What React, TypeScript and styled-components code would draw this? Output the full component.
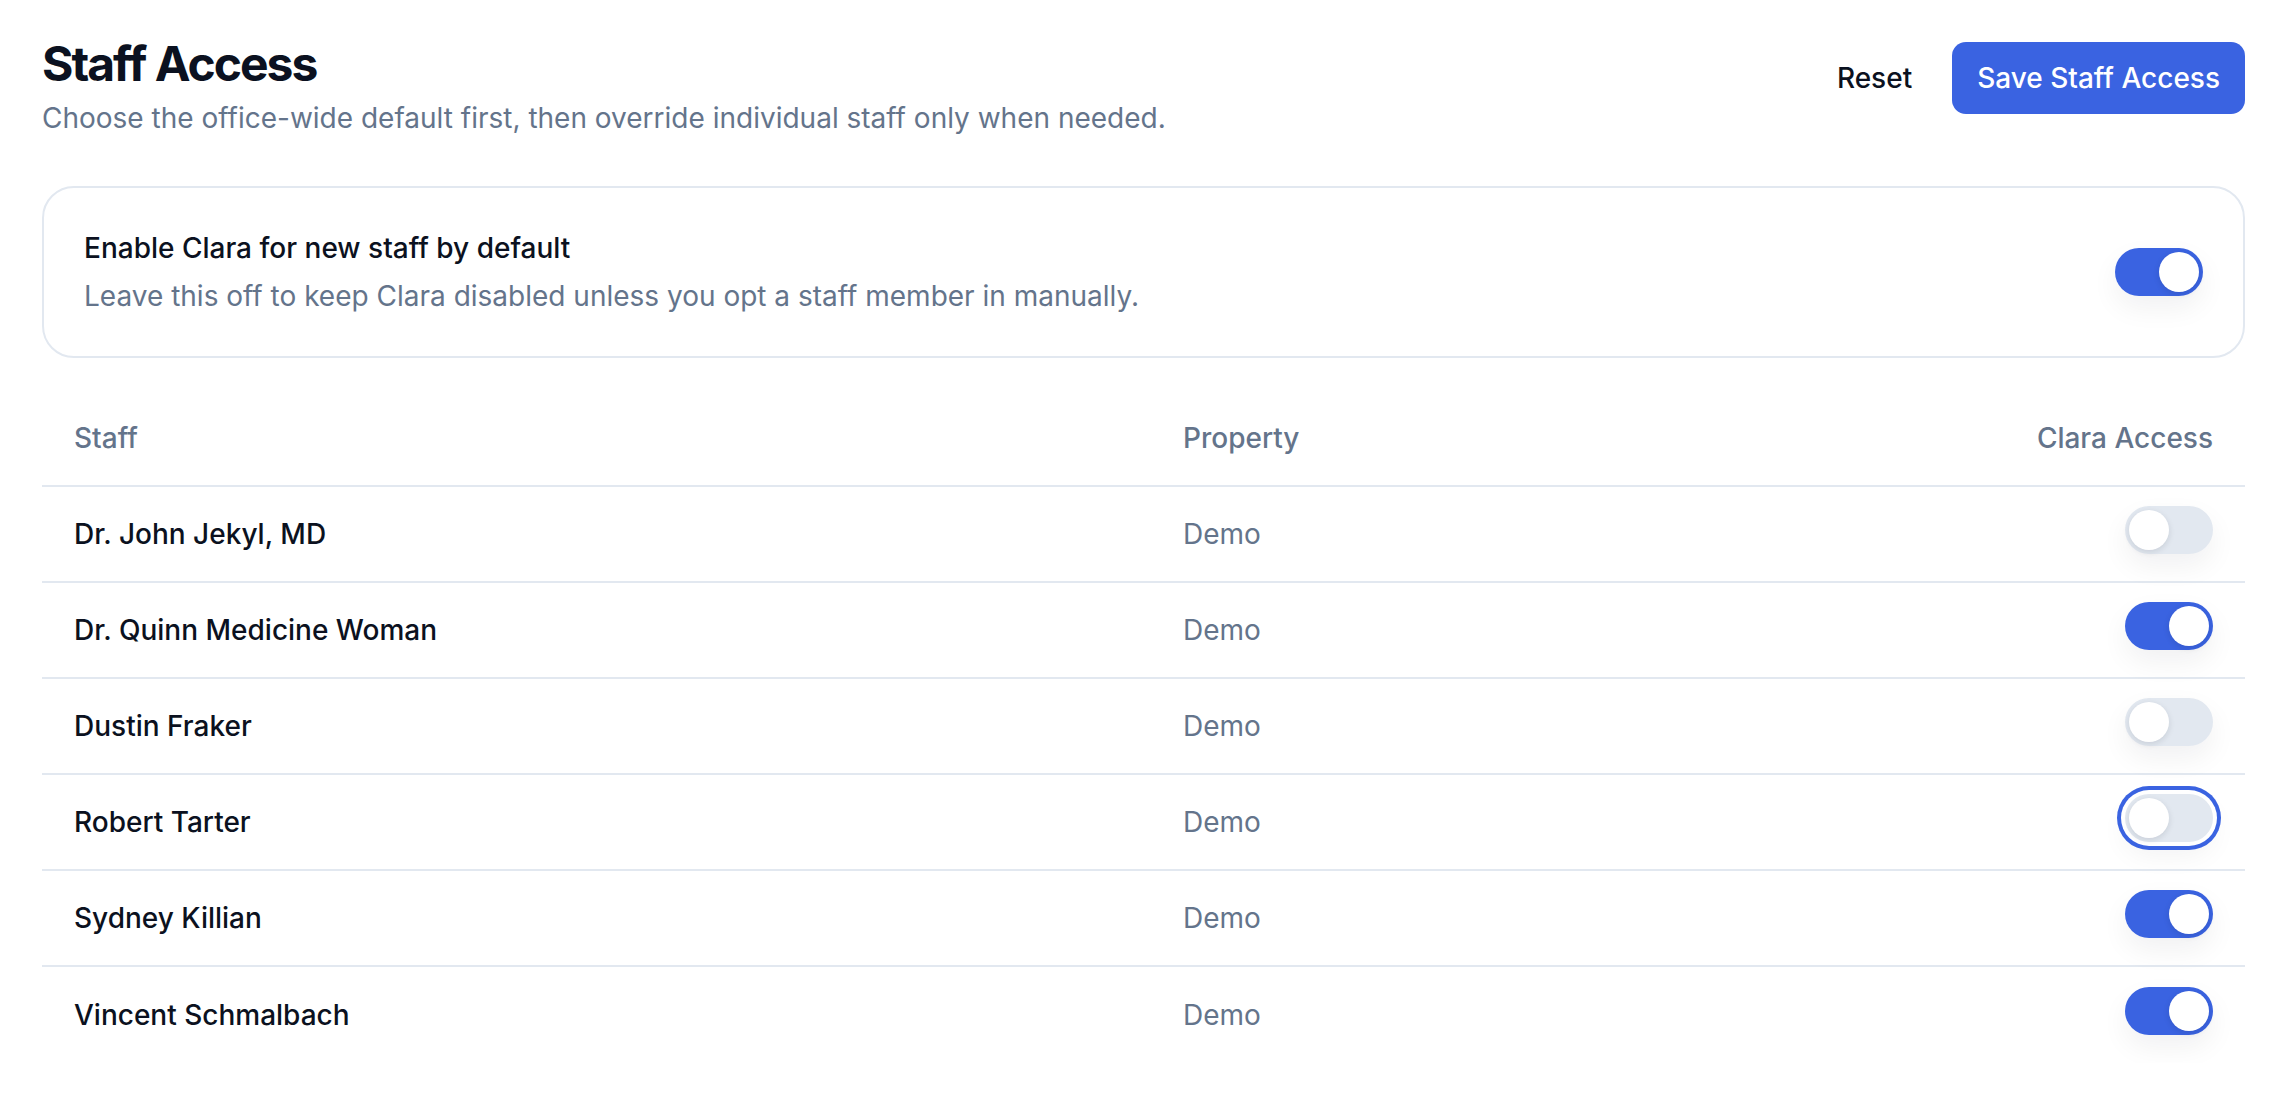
import * as React from 'react'
import styled, { createGlobalStyle, css } from 'styled-components'

const { useState } = React

const GlobalStyle = createGlobalStyle`
  * {
    box-sizing: border-box;
  }
  body {
    margin: 0;
    background: #ffffff;
    font-family: Inter, "Noto Sans", "Liberation Sans", sans-serif;
    color: #0b1120;
    -webkit-font-smoothing: antialiased;
  }
`

const BLUE = '#3a63e1'
const MUTED = '#64748b'
const LINE = '#e2e8f0'

const Page = styled.div`
  padding: 32px 44px 0 42px;
`

const Header = styled.header`
  display: flex;
  justify-content: space-between;
  align-items: flex-start;
`

const Title = styled.h1`
  margin: 0;
  font-size: 48px;
  line-height: 64px;
  font-weight: 650;
  letter-spacing: -2px;
  color: #0b1120;
`

const Subtitle = styled.p`
  margin: 2px 0 0;
  font-size: 28px;
  line-height: 40px;
  color: ${MUTED};
`

const Actions = styled.div`
  display: flex;
  gap: 16px;
  margin-top: 10px;
`

const Button = styled.button<{ $primary?: boolean }>`
  height: 72px;
  padding: 0 24px;
  border: none;
  border-radius: 14px;
  font-family: inherit;
  font-size: 28px;
  font-weight: 500;
  cursor: pointer;
  background: transparent;
  color: #0b1120;
  ${p => p.$primary && css`
    background: ${BLUE};
    color: #ffffff;
    padding: 0 25px;
  `}
`

const Card = styled.section`
  margin-top: 48px;
  border: 2px solid ${LINE};
  border-radius: 32px;
  padding: 40px;
  display: flex;
  justify-content: space-between;
  align-items: center;
`

const CardTitle = styled.div`
  font-size: 28px;
  line-height: 40px;
  font-weight: 500;
`

const CardText = styled.div`
  margin-top: 8px;
  font-size: 28px;
  line-height: 40px;
  color: ${MUTED};
`

const Table = styled.div`
  margin-top: 32px;
`

const Row = styled.div<{ $head?: boolean }>`
  display: grid;
  grid-template-columns: 1109px 1fr auto;
  align-items: center;
  height: 96px;
  border-bottom: 2px solid ${LINE};
  ${p => p.$head && css`
    height: 97px;
  `}
  &:last-child {
    border-bottom: none;
  }
`

const Cell = styled.div<{ $muted?: boolean; $head?: boolean; $right?: boolean }>`
  padding: 0 32px;
  font-size: 28px;
  line-height: 40px;
  font-weight: ${p => (p.$head ? 500 : p.$muted ? 400 : 500)};
  color: ${p => (p.$muted || p.$head ? MUTED : '#0b1120')};
  text-align: ${p => (p.$right ? 'right' : 'left')};
  display: flex;
  justify-content: ${p => (p.$right ? 'flex-end' : 'flex-start')};
`

const Track = styled.button<{ $on: boolean; $focus?: boolean }>`
  width: 88px;
  height: 48px;
  padding: 0;
  border: 4px solid transparent;
  border-radius: 999px;
  background: ${p => (p.$on ? BLUE : LINE)};
  display: inline-flex;
  align-items: center;
  cursor: pointer;
  flex-shrink: 0;
  box-shadow: 0 12px 28px rgba(15, 23, 42, 0.06);
  ${p => p.$focus && css`
    box-shadow: 0 0 0 4px #ffffff, 0 0 0 8px ${BLUE}, 0 12px 28px rgba(15, 23, 42, 0.06);
  `}
`

const Knob = styled.span<{ $on: boolean }>`
  width: 40px;
  height: 40px;
  border-radius: 50%;
  background: #ffffff;
  box-shadow: 0 2px 6px rgba(15, 23, 42, 0.12);
  transform: translateX(${p => (p.$on ? '40px' : '0')});
  transition: transform 0.15s;
`

const RowSwitch = styled.div`
  margin-bottom: 8px;
  display: flex;
`

interface SwitchProps {
  on: boolean
  focus?: boolean
  onToggle: () => void
}

const Switch: React.FC<SwitchProps> = ({ on, focus, onToggle }) => (
  <Track $on={on} $focus={focus} role="switch" aria-checked={on} onClick={onToggle}>
    <Knob $on={on} />
  </Track>
)

const initialStaff = [
  { name: 'Dr. John Jekyl, MD', property: 'Demo', access: false },
  { name: 'Dr. Quinn Medicine Woman', property: 'Demo', access: true },
  { name: 'Dustin Fraker', property: 'Demo', access: false },
  { name: 'Robert Tarter', property: 'Demo', access: false },
  { name: 'Sydney Killian', property: 'Demo', access: true },
  { name: 'Vincent Schmalbach', property: 'Demo', access: true },
]

export default function App() {
  const [defaultOn, setDefaultOn] = useState(true)
  const [staff, setStaff] = useState(initialStaff)

  const toggle = (i: number) =>
    setStaff(list => list.map((s, j) => (j === i ? { ...s, access: !s.access } : s)))

  return (
    <>
      <GlobalStyle />
      <Page>
        <Header>
          <div>
            <Title>Staff Access</Title>
            <Subtitle>Choose the office-wide default first, then override individual staff only when needed.</Subtitle>
          </div>
          <Actions>
            <Button onClick={() => setStaff(initialStaff)}>Reset</Button>
            <Button $primary>Save Staff Access</Button>
          </Actions>
        </Header>

        <Card>
          <div>
            <CardTitle>Enable Clara for new staff by default</CardTitle>
            <CardText>Leave this off to keep Clara disabled unless you opt a staff member in manually.</CardText>
          </div>
          <Switch on={defaultOn} onToggle={() => setDefaultOn(!defaultOn)} />
        </Card>

        <Table>
          <Row $head>
            <Cell $head>Staff</Cell>
            <Cell $head>Property</Cell>
            <Cell $head $right>Clara Access</Cell>
          </Row>
          {staff.map((s, i) => (
            <Row key={s.name}>
              <Cell>{s.name}</Cell>
              <Cell $muted>{s.property}</Cell>
              <Cell $right>
                <RowSwitch>
                  <Switch on={s.access} focus={i === 3} onToggle={() => toggle(i)} />
                </RowSwitch>
              </Cell>
            </Row>
          ))}
        </Table>
      </Page>
    </>
  )
}
